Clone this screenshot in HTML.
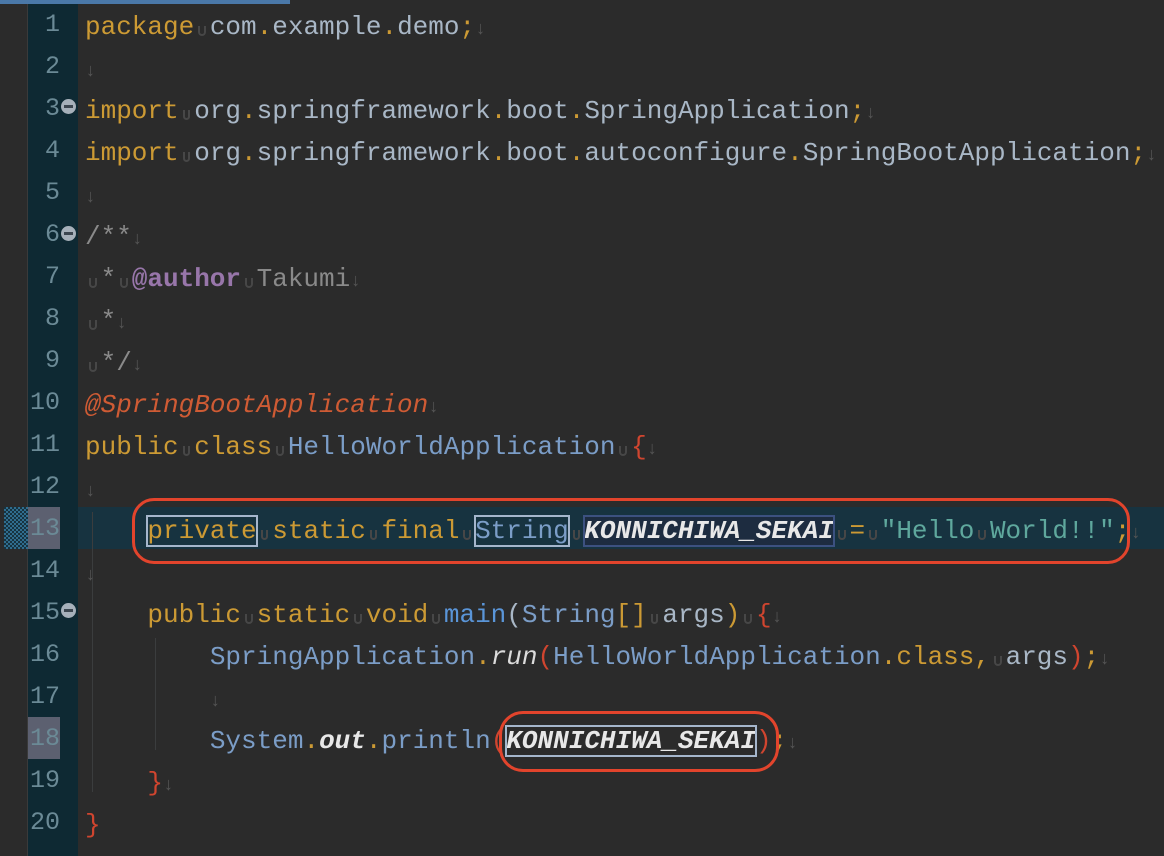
<!DOCTYPE html>
<html><head><meta charset="utf-8"><style>
html,body{margin:0;width:1164px;height:856px;overflow:hidden}
body{background:#2b2b2b;position:relative;font-family:"Liberation Mono","DejaVu Sans Mono",monospace;}
#left{position:absolute;left:0;top:0;width:27px;height:856px;background:#2b2b2b;border-right:1px solid #3a3a3a}
#gut{position:absolute;left:28px;top:0;width:50px;height:856px;background:#0e2933}
#topbar{position:absolute;left:0;top:0;width:290px;height:4px;background:#4a78a8}
.ln{position:absolute;left:26px;width:34px;text-align:right;font-size:25px;color:#6b8a96;height:42px;line-height:42px}
.code{position:absolute;left:85px;top:6px;font-size:26px;line-height:42px;white-space:normal;color:#a9b7c6}
.code div{height:42px;white-space:pre}
.k{color:#cc9a34}.b{color:#7b9dc7}.str{color:#5fa89d}.c{color:#8a8a8a}.r{color:#d0452f}.an{color:#cf5b34;font-style:italic}
.au{color:#9876aa;font-weight:bold}.w{color:#e8e8e8;font-style:italic;font-weight:bold}.it{font-style:italic;color:#dcdcdc}
.s{display:inline-block;width:0.6em;height:1em;position:relative;vertical-align:top}
.s:after{content:"";position:absolute;left:4px;right:4px;bottom:-4px;height:8px;border:2px solid #474747;border-top:none;border-radius:0 0 4px 4px}
.n{color:#555;font-size:18px}
.sel{outline:2px solid #a5b6cc;outline-offset:-1px}
.sel2{outline:2px solid #3c5180;outline-offset:-1px;background:#1d2c40}
.fold{position:absolute;left:61px;width:15px;height:15px;border-radius:50%;background:#a6b0ba}
.fold:after{content:"";position:absolute;left:3px;top:6px;width:9px;height:3px;background:#3c4650}
.g{position:absolute;width:1px;background:#3b3d3e}
.box{position:absolute;border:3px solid #e2442c;border-radius:22px}
</style></head><body>
<div id="left"></div><div id="gut"></div><div id="topbar"></div>
<div style="position:absolute;left:78px;top:507px;width:1086px;height:42px;background:#173340"></div>
<div style="position:absolute;left:4px;top:507px;width:24px;height:42px;background:repeating-conic-gradient(#2f6d8e 0 25%,#173340 0 50%) 0 0/4px 4px"></div>
<div style="position:absolute;left:28px;top:507px;width:32px;height:42px;background:#5c6070"></div>
<div style="position:absolute;left:28px;top:717px;width:32px;height:42px;background:#5c6070"></div>
<div class="ln" style="top:4px">1</div><div class="ln" style="top:46px">2</div><div class="ln" style="top:88px">3</div><div class="ln" style="top:130px">4</div><div class="ln" style="top:172px">5</div><div class="ln" style="top:214px">6</div><div class="ln" style="top:256px">7</div><div class="ln" style="top:298px">8</div><div class="ln" style="top:340px">9</div><div class="ln" style="top:382px">10</div><div class="ln" style="top:424px">11</div><div class="ln" style="top:466px">12</div><div class="ln" style="top:508px">13</div><div class="ln" style="top:550px">14</div><div class="ln" style="top:592px">15</div><div class="ln" style="top:634px">16</div><div class="ln" style="top:676px">17</div><div class="ln" style="top:718px">18</div><div class="ln" style="top:760px">19</div><div class="ln" style="top:802px">20</div>
<div class="fold" style="top:99px"></div><div class="fold" style="top:226px"></div><div class="fold" style="top:603px"></div>
<div class="g" style="left:92px;top:512px;height:280px"></div>
<div class="g" style="left:155px;top:638px;height:112px"></div>
<div class="code"><div><span class="k">package</span><span class="s"></span>com<span class="k">.</span>example<span class="k">.</span>demo<span class="k">;</span><span class="n">↓</span></div><div><span class="n">↓</span></div><div><span class="k">import</span><span class="s"></span>org<span class="k">.</span>springframework<span class="k">.</span>boot<span class="k">.</span>SpringApplication<span class="k">;</span><span class="n">↓</span></div><div><span class="k">import</span><span class="s"></span>org<span class="k">.</span>springframework<span class="k">.</span>boot<span class="k">.</span>autoconfigure<span class="k">.</span>SpringBootApplication<span class="k">;</span><span class="n">↓</span></div><div><span class="n">↓</span></div><div><span class="c">/**</span><span class="n">↓</span></div><div><span class="s"></span><span class="c">*</span><span class="s"></span><span class="au">@author</span><span class="s"></span><span class="c">Takumi</span><span class="n">↓</span></div><div><span class="s"></span><span class="c">*</span><span class="n">↓</span></div><div><span class="s"></span><span class="c">*/</span><span class="n">↓</span></div><div><span class="an">@SpringBootApplication</span><span class="n">↓</span></div><div><span class="k">public</span><span class="s"></span><span class="k">class</span><span class="s"></span><span class="b">HelloWorldApplication</span><span class="s"></span><span class="r">{</span><span class="n">↓</span></div><div><span class="n">↓</span></div><div>    <span class="k sel">private</span><span class="s"></span><span class="k">static</span><span class="s"></span><span class="k">final</span><span class="s"></span><span class="b sel">String</span><span class="s"></span><span class="w sel2">KONNICHIWA_SEKAI</span><span class="s"></span><span class="k">=</span><span class="s"></span><span class="str">"Hello<span class="s"></span>World!!"</span><span class="k">;</span><span class="n">↓</span></div><div><span class="n">↓</span></div><div>    <span class="k">public</span><span class="s"></span><span class="k">static</span><span class="s"></span><span class="k">void</span><span class="s"></span><span style="color:#5a95d8">main</span>(<span class="b">String</span><span class="k">[]</span><span class="s"></span>args<span class="k">)</span><span class="s"></span><span class="r">{</span><span class="n">↓</span></div><div>        <span class="b">SpringApplication</span><span class="k">.</span><span class="it">run</span><span class="r">(</span><span class="b">HelloWorldApplication</span><span class="k">.</span><span class="k">class</span><span class="k">,</span><span class="s"></span>args<span class="r">)</span><span class="k">;</span><span class="n">↓</span></div><div>        <span class="n">↓</span></div><div>        <span class="b">System</span><span class="k">.</span><span class="w">out</span><span class="k">.</span><span class="b">println</span><span class="r">(</span><span class="w sel">KONNICHIWA_SEKAI</span><span class="r">)</span><span class="k">;</span><span class="n">↓</span></div><div>    <span class="r">}</span><span class="n">↓</span></div><div><span class="r">}</span></div></div>
<div class="box" style="left:132px;top:498px;width:992px;height:60px"></div>
<div class="box" style="left:499px;top:711px;width:274px;height:55px;border-radius:24px"></div>
</body></html>
